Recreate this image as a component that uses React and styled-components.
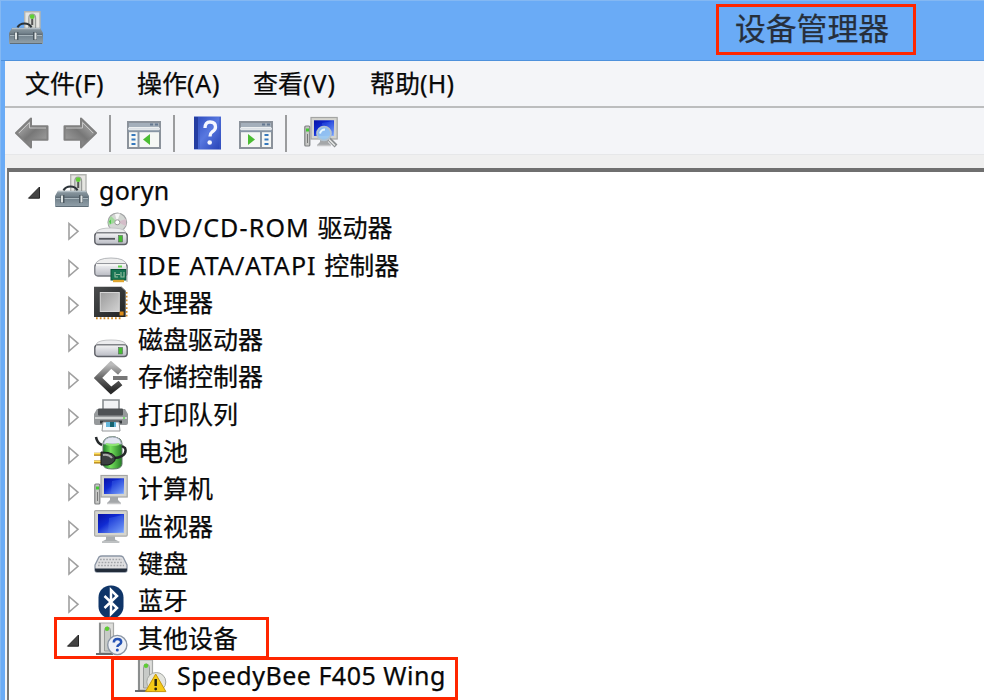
import React from 'react'
import styled, { createGlobalStyle, css } from 'styled-components'

const GlobalStyle = createGlobalStyle`
    *, *::after {
        box-sizing: border-box;
    }

    body {
        margin: 0;
        overflow: hidden;
        background: #6aabf6;
        font-family: "Noto Sans", "Noto Sans CJK SC", sans-serif;
    }
`;

const Window = styled.div`
    width: 984px;
    height: 700px;
    overflow: hidden;
    display: flex;
    flex-direction: column;
    background: #6aabf6;
    border-top: 1px solid #84b8f3;
    border-left: 1px solid #84b8f3;
    color: #080808;
    -webkit-text-stroke: .25px currentColor;
`;

const TitleBar = styled.div`
    height: 60px;
    flex: none;
    display: flex;
    justify-content: space-between;
    align-items: flex-start;
    padding: 3px 68px 0 8px;
    border-bottom: 1px solid #4e91dc;
`;

const TitleIcon = styled.div`
    padding-top: 7px;
`;

const Title = styled.h1`
    width: 200px;
    height: 51px;
    margin: 0;
    padding-left: 16px;
    border: 3px solid #ff2600;
    font-family: "Noto Sans CJK SC", sans-serif;
    font-size: 30.8px;
    font-weight: 400;
    line-height: 39px;
    color: #262f3b;
`;

const Client = styled.div`
    flex: 1;
    min-height: 0;
    margin-left: 4px;
    display: flex;
    flex-direction: column;
    background: #f4f5f8;
`;

const MenuBar = styled.div`
    height: 47px;
    flex: none;
    display: flex;
    gap: 32px;
    padding-left: 20px;
    border-bottom: 2px solid #bcbdbe;
    font-size: 25px;
    line-height: 44px;
    white-space: nowrap;
`;

const MenuItem = styled.div`
    width: ${props => props.$width}px;
`;

const Access = styled.span`
    letter-spacing: ${props => props.$spacing || 0}px;
`;

const ToolBar = styled.div`
    height: 46px;
    flex: none;
    display: flex;
    align-items: center;
    padding: 4px 0 0 10px;
`;

const Tool = styled.div`
    display: flex;
    margin-right: ${props => props.$after}px;
`;

const Separator = styled.div`
    width: 2px;
    height: 37px;
    margin-right: ${props => props.$after}px;
    background: #9b9c9e;
`;

const Strip = styled.div`
    height: 14px;
    flex: none;
    background: #efefef;
    border-top: 1px solid #e6e7e9;
`;

const Tree = styled.div`
    flex: 1;
    min-height: 0;
    margin-left: 2px;
    padding-top: .8px;
    background: #fff;
    border-top: 4px solid #6f6f6f;
    border-left: 2px solid #777;
`;

const Row = styled.div`
    position: relative;
    height: 37.3px;
    display: flex;
    align-items: center;
    padding-left: ${props => 17 + props.$level * 39}px;
    white-space: nowrap;

    ${props => props.$box && css`
        &::after {
            content: '';
            position: absolute;
            left: ${props.$box.left}px;
            top: ${props.$box.top}px;
            width: ${props.$box.width}px;
            height: ${props.$box.height}px;
            border: 3px solid #ff2600;
        }
    `}
`;

const Arrow = styled.div`
    width: 15px;
    height: 20px;
    margin: 4px 14px 0 0;
    display: flex;
`;

const Label = styled.div`
    margin: -3px 0 0 10px;
    font-size: 25px;
    line-height: 36px;
    letter-spacing: ${props => props.$spacing || 0}px;
`;

const Cjk = styled.span`
    letter-spacing: 0;
`;

function Icon({ children, size = 34 }){
    return <svg width={size} height={size} viewBox="0 0 34 34" fill="none">{children}</svg>
}

const Defs = styled.svg`
    position: absolute;
`;

function Gradients(){
    return <Defs width="0" height="0">
        <defs>
            <linearGradient id="metal" x1="0" y1="0" x2="0" y2="1">
                <stop offset="0" stopColor="#8e9ba3" />
                <stop offset=".4" stopColor="#6f7e88" />
                <stop offset="1" stopColor="#93a2ab" />
            </linearGradient>
            <linearGradient id="silver" x1="0" y1="0" x2="0" y2="1">
                <stop offset="0" stopColor="#f3f3f5" />
                <stop offset="1" stopColor="#b9bbc3" />
            </linearGradient>
            <linearGradient id="arrow" x1="0" y1="0" x2="1" y2="1">
                <stop offset="0" stopColor="#c4c4c4" />
                <stop offset=".5" stopColor="#777" />
                <stop offset="1" stopColor="#aaa" />
            </linearGradient>
            <linearGradient id="screen" x1="0" y1="0" x2="1" y2="1">
                <stop offset="0" stopColor="#0811a5" />
                <stop offset=".4" stopColor="#102bd2" />
                <stop offset="1" stopColor="#91b8ff" />
            </linearGradient>
            <linearGradient id="help" x1="0" y1="0" x2="1" y2="1">
                <stop offset="0" stopColor="#2947bb" />
                <stop offset=".5" stopColor="#5878e0" />
                <stop offset="1" stopColor="#2440b5" />
            </linearGradient>
            <linearGradient id="dark" x1="0" y1="0" x2="1" y2="1">
                <stop offset="0" stopColor="#4b4d4e" />
                <stop offset="1" stopColor="#202223" />
            </linearGradient>
            <linearGradient id="die" x1="0" y1="0" x2="1" y2="1">
                <stop offset="0" stopColor="#9b9b9b" />
                <stop offset="1" stopColor="#d2d2d2" />
            </linearGradient>
            <linearGradient id="diamond" x1="0" y1="0" x2="0" y2="1">
                <stop offset="0" stopColor="#bbb" />
                <stop offset=".5" stopColor="#666" />
                <stop offset="1" stopColor="#292929" />
            </linearGradient>
            <linearGradient id="cell" x1="0" y1="0" x2="1" y2="0">
                <stop offset="0" stopColor="#1d7f28" />
                <stop offset=".4" stopColor="#76e05d" />
                <stop offset="1" stopColor="#237c25" />
            </linearGradient>
        </defs>
    </Defs>
}

function Toolbox(){
    return <Icon>
        <path d="M15.7.7H31V19H15.7z" fill="#e6e6e2" stroke="#b3b5b2" strokeWidth="1.4" />
        <path d="M19.8 17V7.5q0-4.5 3.4-4.5t3.4 4.5V17" fill="#d2d5d0" stroke="#979a98" strokeWidth="1.2" />
        <path d="M23.2 8v6" stroke="#555" strokeWidth="2" />
        <circle cx="23.2" cy="5.7" r="2.4" fill="#60cf35" />
        <path d="M8.5 16.5q2-4 7-4t7 4" stroke="#2c3338" strokeWidth="2.2" />
        <path d="M3 16.8h28L34 22v11H0V22z" fill="url(#metal)" />
        <path d="M3 17.6h28" stroke="#b2bec5" strokeWidth="1.2" />
        <path d="M1 23.3h32" stroke="#5d6a73" />
        <path d="M1 24.5h32" stroke="#a9b6bd" />
        <path d="M7.5 21v8M26 21v8" stroke="#4c5860" strokeWidth="4" />
        <path d="M7 21.5v7M26.5 21.5v7" stroke="#dfe4e4" strokeWidth="2" />
        <path d="M1 32.5h32" stroke="#5f6d77" />
    </Icon>
}

function DriveBody(){
    return <>
        <path d="M3 19q3-3 14-3t14 3l2.5 5H.5z" fill="#ececee" stroke="#c5c6c8" />
        <rect x=".8" y="21" width="32.4" height="11.5" rx="3" fill="url(#silver)" stroke="#5e6067" strokeWidth="1.4" />
        <path d="M2 22h30" stroke="#eee" />
    </>
}

function DvdDrive(){
    return <Icon>
        <circle cx="23.3" cy="10.3" r="9.3" fill="#d3d6d3" stroke="#a2a4a5" strokeWidth="1.2" />
        <path d="M23 10L17 4q-3 4-2.5 9z" fill="#a1d99b" />
        <path d="M23 10l-2-8 5-.5z" fill="#f7f7f7" />
        <path d="M23 10l9-3v7z" fill="#d4bec9" />
        <path d="M15 9.5l2-2v5z" fill="#4ec54b" />
        <circle cx="23.3" cy="10.3" r="2.5" fill="#fff" stroke="#999" />
        <DriveBody />
        <path d="M5 26.8h16" stroke="#55575d" strokeWidth="1.8" />
        <rect x="24.5" y="23.5" width="4" height="6.5" fill="#45bd32" stroke="#56665a" strokeWidth=".6" />
    </Icon>
}

function IdeController(){
    return <Icon>
        <path d="M1 16q2-7 16-7t16 7v7H1z" fill="#eee" stroke="#b4b6ba" />
        <rect x=".8" y="15" width="32.4" height="12" rx="3" fill="url(#silver)" stroke="#777980" strokeWidth="1.3" />
        <path d="M2 16h30" stroke="#f4f4f4" strokeWidth="2" />
        <path d="M24 17.5h4" stroke="#5ed04a" strokeWidth="2" />
        <rect x="17" y="20.5" width="15" height="10.5" fill="#177453" stroke="#0d5237" />
        <path d="M21 23v5h3M22 25.5h4M27 23v5h3v-5" stroke="#9ac0a2" strokeWidth="1.1" />
        <path d="M19 32h11" stroke="#dfa730" strokeWidth="2.4" />
        <path d="M33 19v14" stroke="#a5a9ab" />
    </Icon>
}

function Processor(){
    return <Icon>
        <path d="M32.5 6v25" stroke="#d28b24" strokeWidth="2" strokeDasharray="1.7 2.1" />
        <path d="M2 32.3h26" stroke="#d28b24" strokeWidth="2" strokeDasharray="1.7 2.1" />
        <path d="M0 .7h27l4.4 4V31H0z" fill="url(#dark)" />
        <path d="M27 .7l4.4 4V31" stroke="#6b6e6e" />
        <rect x="6.3" y="6.5" width="19" height="19" fill="url(#die)" stroke="#d6d6d6" />
        <rect x="25.6" y="25.5" width="4" height="4" fill="#dc8c19" />
    </Icon>
}

function DiskDrive(){
    return <Icon>
        <DriveBody />
        <rect x="24.5" y="23.5" width="4" height="6.5" fill="#45bd32" stroke="#56665a" strokeWidth=".6" />
    </Icon>
}

function StorageController(){
    return <Icon>
        <path d="M26 11.5L17 3.8 4 17l13 12.5 9.5-7.5" stroke="url(#diamond)" strokeWidth="6" />
        <path d="M19 17h14.5" stroke="#777" strokeWidth="4" />
    </Icon>
}

function Printer(){
    return <Icon>
        <path d="M9 12V2h16v10" fill="#f2f3f5" stroke="#898e91" strokeWidth="1.6" />
        <path d="M3 11h28l3 5v9q0 2-2 2H2q-2 0-2-2v-9z" fill="#96999b" />
        <rect x="4" y="10.5" width="25" height="7" rx="1" fill="#4e5154" />
        <path d="M1 20h32" stroke="#d0d2d2" strokeWidth="2" />
        <path d="M6 24h22" stroke="#35393d" strokeWidth="3" />
        <path d="M9 24h16l1 9H8z" fill="#f8f9fb" stroke="#949698" />
        <path d="M12 24h10v5H12z" fill="#66b6da" />
        <path d="M16 24h4v5h-4z" fill="#16636f" />
        <circle cx="30" cy="20" r="1" fill="#5adf4e" />
    </Icon>
}

function Battery(){
    return <Icon>
        <path d="M9 8q0-5 6-7 6-1.5 11 2 2 2 2 5v20q0 5-9.5 5T9 28z" fill="url(#cell)" stroke="#62736a" />
        <path d="M9.5 8q1-7 9-7t9 7z" fill="#e1e5f1" stroke="#a2a8b9" />
        <path d="M12 8q7 2 13 0" stroke="#8ee575" strokeWidth="2" />
        <path d="M2 1q1 6 6 8M20 22q5 0 8-2 5-3 3-8l-3-2" stroke="#25292b" strokeWidth="2.5" />
        <path d="M0 18.3h8M0 26h8" stroke="#ad7a0b" strokeWidth="3" />
        <path d="M0 17.8h7M0 25.5h7" stroke="#ffe05c" strokeWidth="1.4" />
        <path d="M7 16l7 .5q5 1 7 4v4q-3 4-7 4.5L7 29z" fill="#3b3f40" stroke="#161818" />
        <path d="M9 19q6-1 9 3" stroke="#aaa" strokeWidth="2" />
    </Icon>
}

function ComputerArt(){
    return <>
        <rect x=".8" y="11" width="5" height="20" rx="1" fill="#c6c7c5" stroke="#7e8082" strokeWidth="1.2" />
        <path d="M2 15h3" stroke="#43c933" strokeWidth="3" />
        <path d="M3.5 19v9" stroke="#777" />
        <rect x="7" y="2.5" width="26.2" height="21.5" fill="#d4d4cf" stroke="#a4a5a4" strokeWidth="1.2" />
        <rect x="10" y="5.3" width="20" height="15.7" fill="url(#screen)" />
        <path d="M18 8l11-2v14H17z" fill="#4d79ef" opacity=".35" />
        <path d="M16 24h8v3l3 3H13l3-3z" fill="#a4a7a9" />
        <path d="M13 30.5h14" stroke="#c6c7c8" strokeWidth="1.5" />
    </>
}

function Computer(){
    return <Icon><ComputerArt /></Icon>
}

function Monitor(){
    return <Icon>
        <rect x=".6" y=".7" width="32.6" height="25.4" rx="1" fill="#d5d5ce" stroke="#a9aaa8" strokeWidth="1.2" />
        <rect x="4" y="4" width="26" height="19" fill="url(#screen)" />
        <path d="M15 8l14-3v17H14z" fill="#4d79ef" opacity=".35" />
        <path d="M12 26.5h9v3l4 2v1.5H8v-1.5l4-2z" fill="#a9adaf" />
        <path d="M8 32h18" stroke="#d2d4d5" />
    </Icon>
}

function Keyboard(){
    return <Icon>
        <path d="M1 18L5 10q1-1 3-1h18q2 0 3 1l4 8v5q0 2-2 2H3q-2 0-2-2z" fill="#e0e0e2" stroke="#8c96a5" strokeWidth="1.3" />
        <path d="M6 12.5h22M4.5 15.5h25M4 18.5h26" stroke="#a3a5a9" strokeWidth="1.7" strokeDasharray="1.7 1.4" />
        <path d="M1 21.5h32V23q0 2-2 2H3q-2 0-2-2z" fill="#222c3a" />
    </Icon>
}

function Bluetooth(){
    return <Icon>
        <rect x="4.5" y=".4" width="25" height="33" rx="12" fill="#0f3568" />
        <path d="M10.5 11L23 23l-6 6V5l6 6-12.5 12" stroke="#fff" strokeWidth="2.5" />
    </Icon>
}

function Tower(){
    return <>
        <path d="M5.5 1h14v30h-14z" fill="#dededb" stroke="#a8aaa8" strokeWidth="1.2" />
        <path d="M6 1v30" stroke="#8b8e8e" strokeWidth="2" />
        <path d="M10.5 29V9q0-4 3-4t3 4v20z" fill="#c7cac7" stroke="#989b99" />
        <circle cx="13" cy="6.8" r="2.2" fill="#5ecd33" />
        <path d="M2 32h17" stroke="#595c5e" strokeWidth="1.8" />
    </>
}

function UnknownDevice(){
    return <Icon>
        <Tower />
        <circle cx="23.3" cy="23" r="9.6" fill="#eef1f7" stroke="#8b96a5" strokeWidth="1.4" />
        <path d="M19.8 20.5q0-3.5 3.7-3.5t3.7 3q0 1.6-2 2.7-1.8.9-1.8 2.4" stroke="#2452b5" strokeWidth="2.5" />
        <circle cx="23.3" cy="28" r="1.5" fill="#2452b5" />
    </Icon>
}

function WarningDevice(){
    return <Icon>
        <Tower />
        <circle cx="23.3" cy="23" r="9.5" fill="#e4e5df" stroke="#a5a8a4" />
        <path d="M22.7 15l10.2 17.6H12.5z" fill="#f5cb16" stroke="#c6970c" strokeLinejoin="round" />
        <path d="M22.7 20v7" stroke="#292510" strokeWidth="2.5" />
        <circle cx="22.7" cy="30" r="1.4" fill="#292510" />
    </Icon>
}

function Navigate({ forward }){
    return <Icon>
        <g transform={forward ? 'translate(34 0) scale(-1 1)' : undefined}>
            <path d="M1 17L16 2.5v7.7h16.5v13.6H16v7.7z" fill="url(#arrow)" stroke="#808080" strokeWidth="2" strokeLinejoin="round" />
            <path d="M4 17L14.5 6.5v5.5h16.5" stroke="#c5c5c5" />
        </g>
    </Icon>
}

function Pane({ right }){
    return <Icon>
        <rect x="1" y="6" width="32" height="26" fill="#f5f7f5" stroke="#8b929b" strokeWidth="2" />
        <path d="M2 9h30" stroke="#a4afbb" strokeWidth="4" />
        <path d="M1 12.7h32" stroke="#dbe0e6" strokeWidth="2" />
        <path d="M1 15.2h32" stroke="#8795a5" strokeWidth="2" />
        <path d="M23 8.5h3M28 8.5h3" stroke="#657991" strokeWidth="2" />
        {right ? <>
            <path d="M22 16v15" stroke="#8997a5" strokeWidth="2" />
            <path d="M25.5 19h4M25.5 23.5h4M25.5 28h4" stroke="#3478bd" strokeWidth="1.8" />
            <path d="M9 18l7 5.5L9 29z" fill="#4abd32" />
        </> : <>
            <path d="M11.5 16v15" stroke="#8997a5" strokeWidth="2" />
            <path d="M4.5 19h4M4.5 23.5h4M4.5 28h4" stroke="#3478bd" strokeWidth="1.8" />
            <path d="M23 18l-7 5.5 7 5.5z" fill="#4abd32" />
        </>}
    </Icon>
}

function Help(){
    return <svg width="27" height="34" viewBox="0 0 27 34" fill="none">
        <path d="M0 .5h27v33H0z" fill="url(#help)" />
        <path d="M2 1v32" stroke="#243da2" strokeWidth="4" />
        <path d="M5 1v32M26 1v32" stroke="#3d5bc5" />
        <path d="M11 12q0-6 5-6 5.5 0 5.5 5 0 3-3.5 5-2 1.5-2 4.5" stroke="#f5f7ff" strokeWidth="3.3" />
        <circle cx="15.7" cy="26.5" r="2.3" fill="#f5f7ff" />
    </svg>
}

function ScanHardware(){
    return <Icon>
        <g transform="translate(0 -1)"><ComputerArt /></g>
        <path d="M24 22l8 8" stroke="#8b8f91" strokeWidth="4" />
        <path d="M25 23.5l6 6" stroke="#e7e9e7" strokeWidth="1.5" />
        <circle cx="20" cy="17.5" r="7" fill="#98c8f2" fillOpacity=".9" stroke="#b3c3cf" strokeWidth="1.7" />
        <path d="M16 17.5q1-4 5-4" stroke="#e9f8ff" strokeWidth="2" />
    </Icon>
}

function Twisty({ open }){
    return <Arrow>
        <svg width="15" height="20" viewBox="0 0 15 20" fill="none">
            {open
                ? <path d="M2.5 15.2L13.5 4v11.2z" fill="#444" stroke="#252525" strokeLinejoin="round" />
                : <path d="M4 2.5l9 7.8L4 18z" fill="#fff" stroke="#a0a0a0" strokeWidth="1.6" />}
        </svg>
    </Arrow>
}

const devices = [
    { latin: 'DVD/CD-ROM ', name: '驱动器', icon: DvdDrive, spacing: 1.15 },
    { latin: 'IDE ATA/ATAPI ', name: '控制器', icon: IdeController, spacing: 1.07 },
    { name: '处理器', icon: Processor },
    { name: '磁盘驱动器', icon: DiskDrive },
    { name: '存储控制器', icon: StorageController },
    { name: '打印队列', icon: Printer },
    { name: '电池', icon: Battery },
    { name: '计算机', icon: Computer },
    { name: '监视器', icon: Monitor },
    { name: '键盘', icon: Keyboard },
    { name: '蓝牙', icon: Bluetooth },
];

export default function App(){
    return <Window>
        <GlobalStyle />
        <Gradients />
        <TitleBar>
            <TitleIcon><Toolbox /></TitleIcon>
            <Title>设备管理器</Title>
        </TitleBar>
        <Client>
            <MenuBar>
                <MenuItem $width={80}>文件<Access $spacing={.3}>(F)</Access></MenuItem>
                <MenuItem $width={84}>操作<Access $spacing={.7}>(A)</Access></MenuItem>
                <MenuItem $width={85}>查看<Access $spacing={1}>(V)</Access></MenuItem>
                <MenuItem $width={85}>帮助<Access $spacing={.2}>(H)</Access></MenuItem>
            </MenuBar>
            <ToolBar>
                <Tool $after={14}><Navigate /></Tool>
                <Tool $after={12}><Navigate forward /></Tool>
                <Separator $after={16} />
                <Tool $after={12}><Pane /></Tool>
                <Separator $after={19} />
                <Tool $after={18}><Help /></Tool>
                <Tool $after={12}><Pane right /></Tool>
                <Separator $after={17} />
                <Tool $after={0}><ScanHardware /></Tool>
            </ToolBar>
            <Strip />
            <Tree>
                <Row $level={0}>
                    <Twisty open />
                    <Toolbox />
                    <Label $spacing={.3}>goryn</Label>
                </Row>
                {devices.map(({ latin, name, icon: DeviceIcon, spacing }) => (
                    <Row key={name} $level={1}>
                        <Twisty />
                        <DeviceIcon />
                        <Label $spacing={spacing}>{latin}<Cjk>{name}</Cjk></Label>
                    </Row>
                ))}
                <Row $level={1} $box={{ left: 45, top: -3, width: 215, height: 42 }}>
                    <Twisty open />
                    <UnknownDevice />
                    <Label>其他设备</Label>
                </Row>
                <Row $level={2} $box={{ left: 102, top: -1, width: 347, height: 43 }}>
                    <Arrow />
                    <WarningDevice />
                    <Label $spacing={.5}>SpeedyBee F405 Wing</Label>
                </Row>
            </Tree>
        </Client>
    </Window>
}
